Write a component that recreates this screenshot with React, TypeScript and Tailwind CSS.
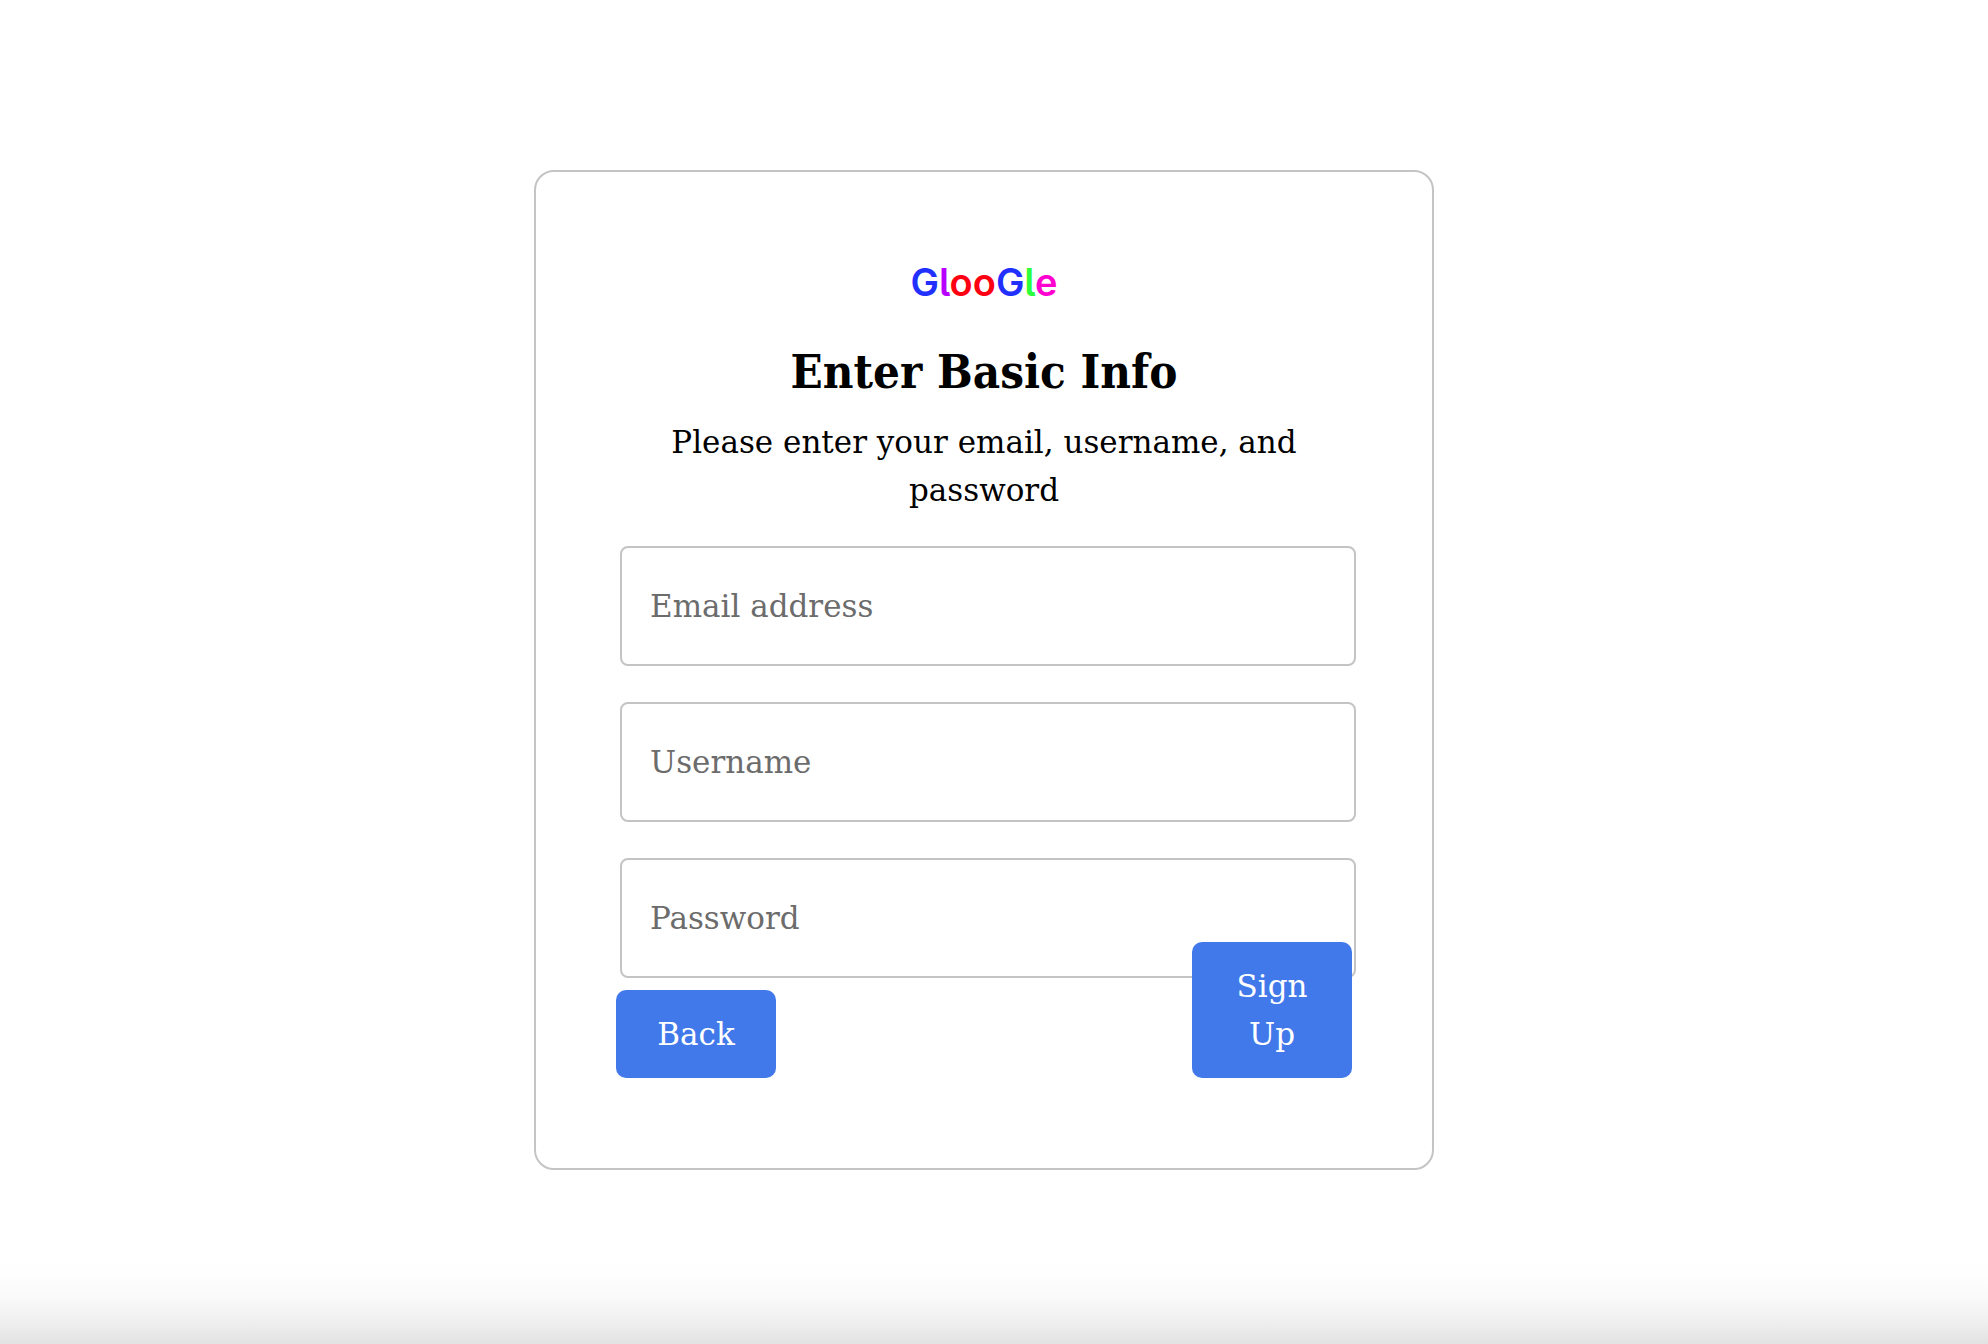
const logoLetters = [
  { letter: 'G', color: 'text-[#2230ff]' },
  { letter: 'l', color: 'text-[#b800ff]' },
  { letter: 'o', color: 'text-[#ff0012]' },
  { letter: 'o', color: 'text-[#ff0012]' },
  { letter: 'G', color: 'text-[#2230ff]' },
  { letter: 'l', color: 'text-[#2cff3c]' },
  { letter: 'e', color: 'text-[#ff00d0]' },
];

const fields = [
  { id: 'email', label: 'Email address', type: 'email' },
  { id: 'username', label: 'Username', type: 'text' },
  { id: 'password', label: 'Password', type: 'password' },
];

function Logo() {
  return (
    <div className="text-center font-['Inter',sans-serif] text-[38px] leading-[60px] font-semibold [font-feature-settings:'cv05']">
      {logoLetters.map(({ letter, color }, i) => (
        <span key={i} className={color}>
          {letter}
        </span>
      ))}
    </div>
  );
}

const buttonClass =
  'w-40 rounded-[10px] bg-[#4179ea] px-8 py-5 text-center text-white hover:bg-[#3569d4]';

export default function App() {
  return (
    <main className="flex min-h-screen flex-col items-center justify-center bg-[linear-gradient(to_top,#e2e2e2_0px,#f0f0f0_24px,#fafafa_48px,#fefefe_72px,#ffffff_90px)] pr-5 pb-1 font-['DejaVu_Serif',serif] text-[31px] leading-[48px] text-black">
      <form
        className="w-full max-w-[900px] rounded-[20px] border-2 border-[#c4c4c4] bg-white px-20 pt-20 pb-[90px]"
        onSubmit={(e) => e.preventDefault()}
      >
        <Logo />
        <h1 className="mt-7 text-center font-['DejaVu_Serif_Condensed','DejaVu_Serif',serif] text-[47px] leading-[64px] font-bold">
          Enter Basic Info
        </h1>
        <p className="mt-3.5 text-center">Please enter your email, username, and password</p>
        <div className="mt-8 flex flex-col gap-9 pl-1">
          {fields.map(({ id, label, type }) => (
            <input
              key={id}
              id={id}
              type={type}
              aria-label={label}
              placeholder={label}
              className="-mr-1 h-[120px] rounded-lg border-2 border-[#c4c4c4] bg-transparent px-7 placeholder:text-[#6c6c6c]"
            />
          ))}
        </div>
        <div className="relative -mt-9 flex items-end justify-between">
          <button type="button" className={buttonClass}>
            Back
          </button>
          <button type="submit" className={buttonClass}>
            Sign Up
          </button>
        </div>
      </form>
    </main>
  );
}
